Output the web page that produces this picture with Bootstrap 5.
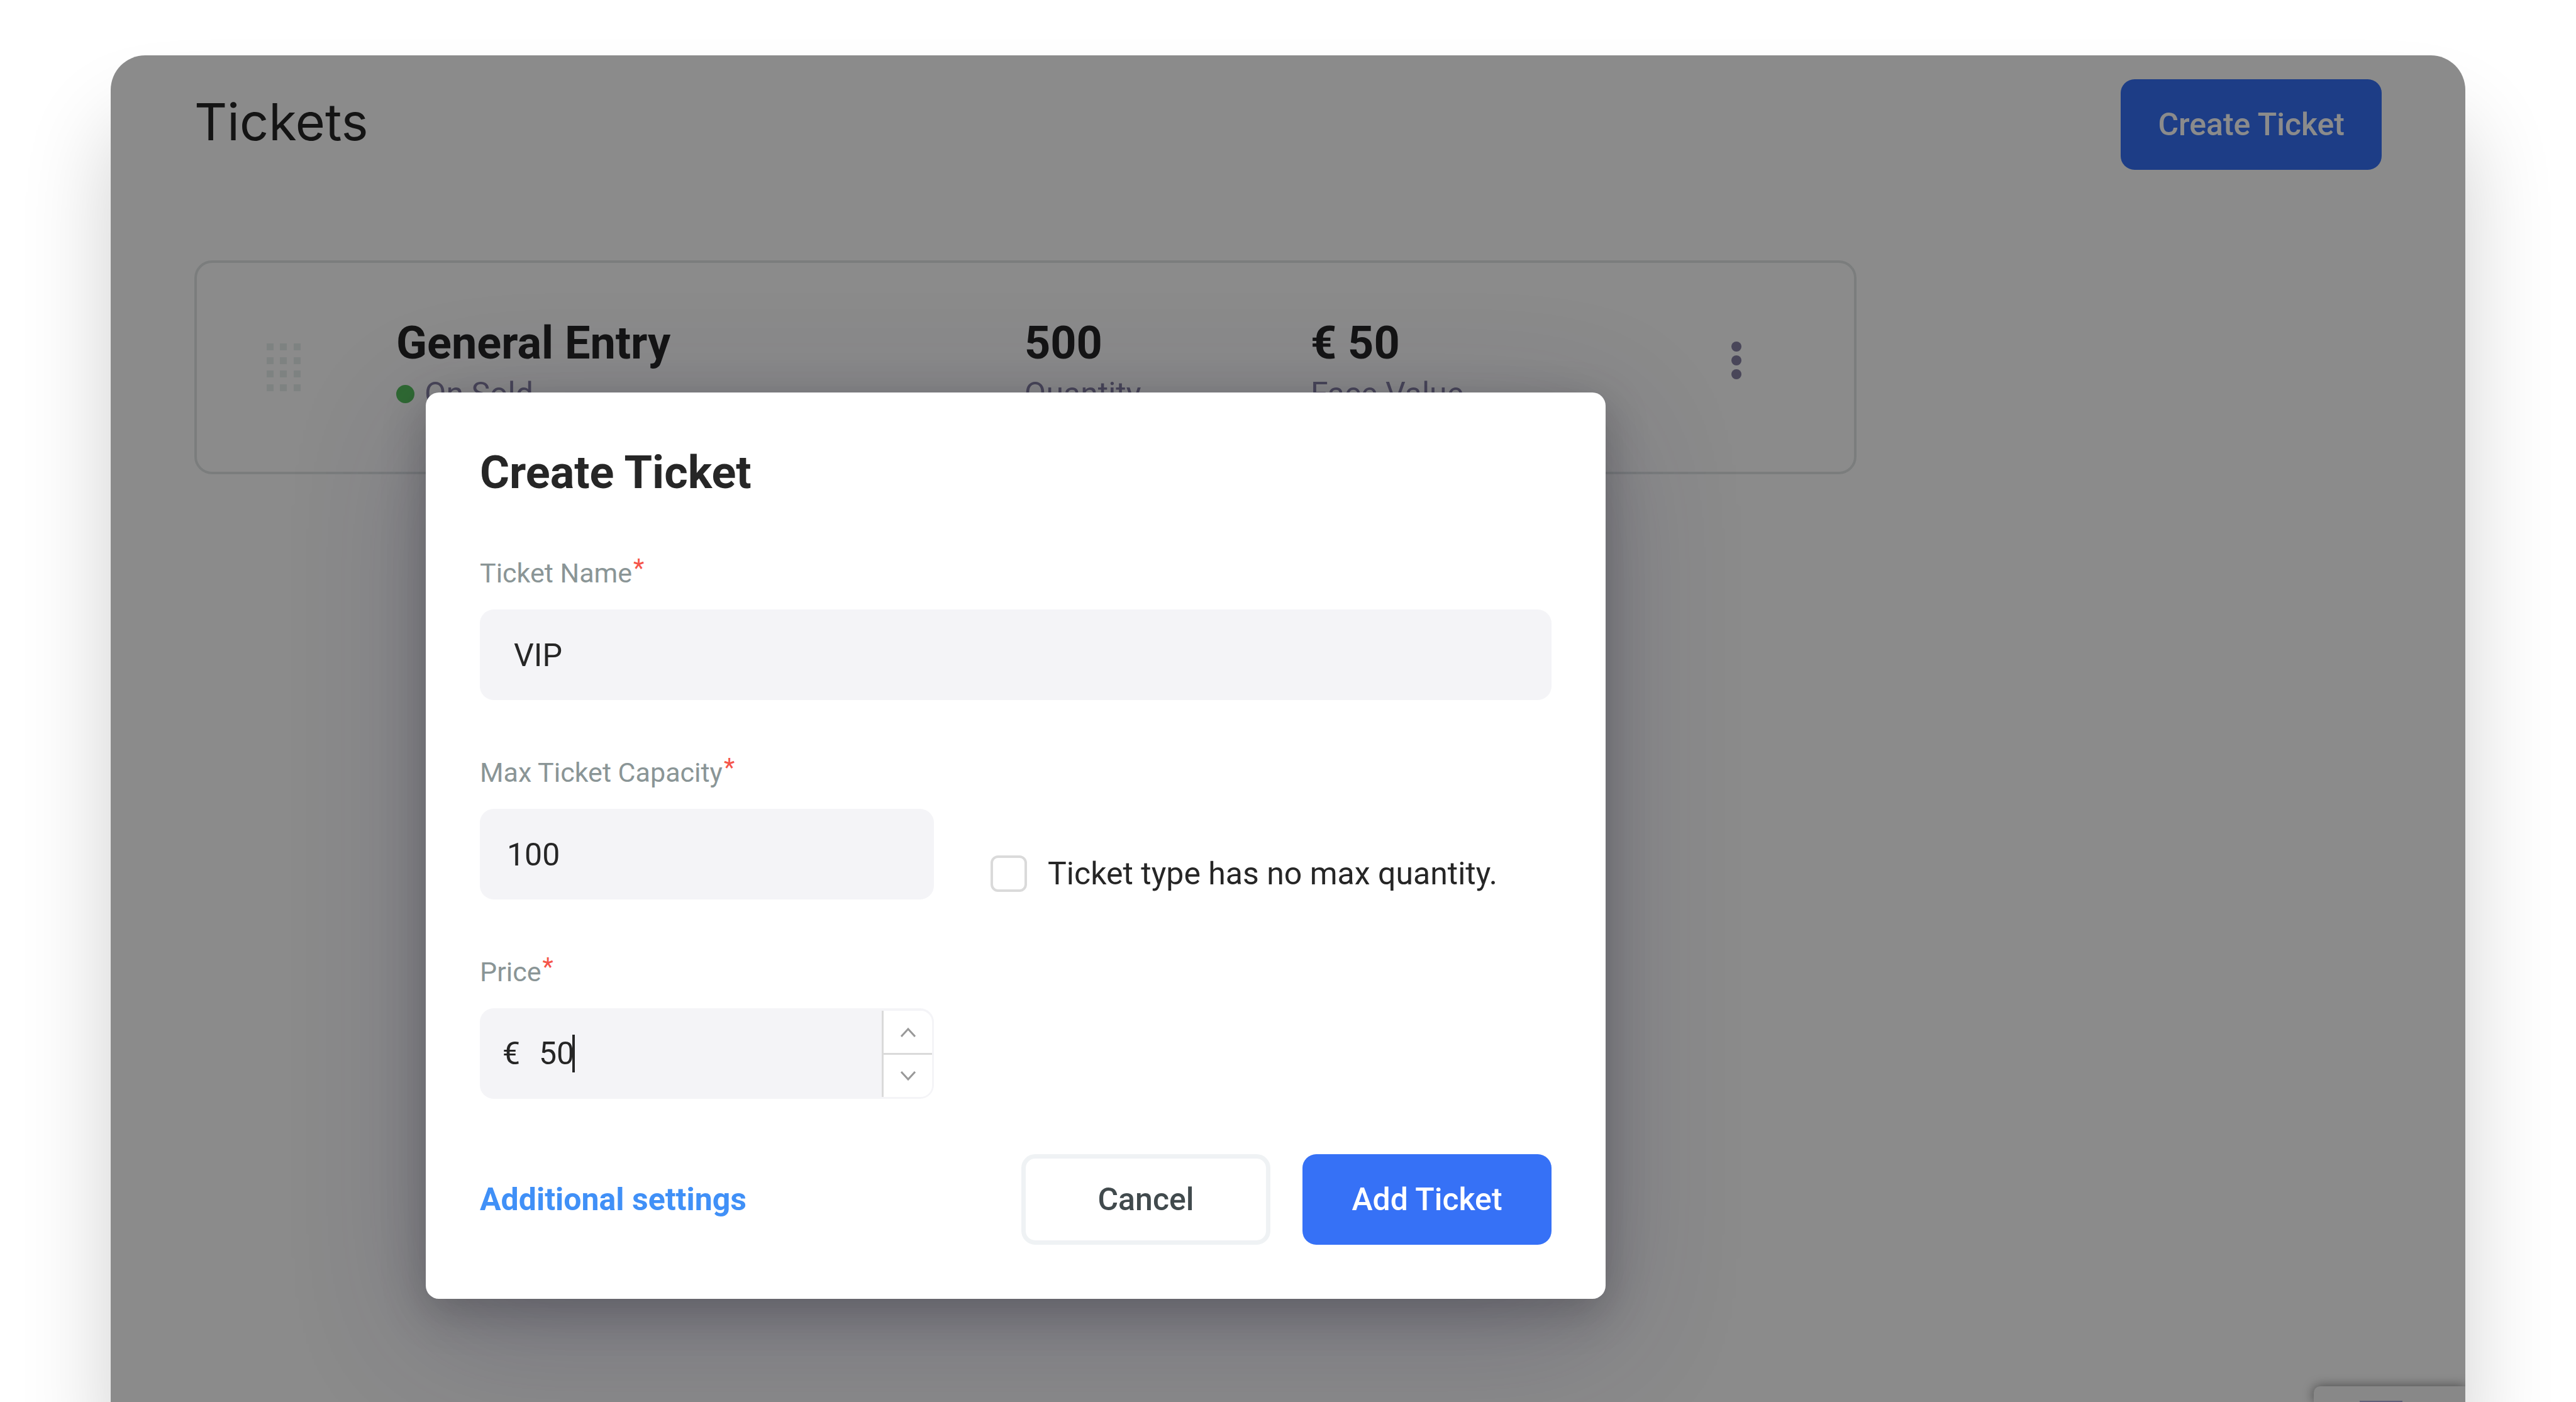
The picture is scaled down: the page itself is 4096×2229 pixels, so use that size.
<!DOCTYPE html>
<html lang="en">
<head>
<meta charset="utf-8">
<meta name="viewport" content="width=device-width, initial-scale=1">
<title>Tickets</title>
<link href="https://cdn.jsdelivr.net/npm/bootstrap@5.3.0/dist/css/bootstrap.min.css" rel="stylesheet">
<style>
  body { background: #fff; color: #262626; font-family: Roboto, "Liberation Sans", sans-serif; font-size: 50px; line-height: 58px; }
  .stage { height: 100vh; padding: 88px 176px 0; }
  .app-window { border-radius: 55px 55px 0 0; background: #fff; box-shadow: 0 110px 140px rgba(0,0,0,.19); }
  .app-body { padding: 38px 133px 0; }
  .page-title { font-family: Inter, sans-serif; font-size: 81px; line-height: 96px; font-weight: 400; padding-bottom: 8px; margin: 0; }
  .btn-app { height: 144px; min-width: 396px; padding: 0 59px; border: 0; border-radius: 22px; font-size: 50px; line-height: 58px; font-weight: 500; }
  .btn-blue, .btn-blue:hover { background: #3671f6; color: #fff; }
  .btn-line { border: 7px solid #eff2f4; background: #fff; color: #414a4d; }

  .ticket-row { width: 76%; height: 340px; margin-top: 144px; border: 4px solid #e1e6e6; border-radius: 28px; display: grid; grid-template-columns: 317px 997fr 454fr 668fr 195px; }
  .ticket-cell { padding-top: 86px; }
  .cell-value { font-size: 72px; line-height: 84px; font-weight: 700; margin-bottom: 9px; }
  .cell-note { color: #8681a3; }
  .status-dot { width: 29px; height: 29px; border-radius: 50%; background: #56c25e; }
  .grip { padding-left: 111px; }
  .kebab { padding: 0 0 22px; border: 0; background: none; }

  .backdrop { background: rgba(0,0,0,.455); }
  .ticket-dialog { top: 536px; left: 501px; width: 1876px; padding: 86px; border-radius: 21px; background: #fff; box-shadow: 0 57px 215px rgba(40,36,80,.24), 0 20px 70px rgba(0,0,0,.24); }
  .dialog-title { font-size: 72px; line-height: 84px; font-weight: 700; margin: 0 0 92px; }
  .field { margin-bottom: 90px; }
  .field-last { margin-bottom: 88px; }
  .field-label { display: block; font-size: 43px; line-height: 50px; color: #8a9596; margin-bottom: 33px; }
  .field-label span { color: #f5554a; font-size: 40px; line-height: 30px; vertical-align: 9px; margin-left: 2px; }
  .field-box, .field-box:focus { height: 144px; border: 0; border-radius: 22px; background: #f4f4f7; color: #262626; font-size: 50px; line-height: 58px; padding: 2px 43px 0; box-shadow: none; }
  .field-wide { padding-left: 54px; padding-right: 54px; }
  .field-half { width: 722px; }
  .gap-check { gap: 90px; }
  .no-max { gap: 33px; padding-bottom: 12px; }
  .no-max .form-check-input { width: 58px; height: 58px; margin: 0; border: 4px solid #dadada; border-radius: 12px; }
  .price-box { padding: 0 0 0 36px; }
  .price-sign { width: 58px; }
  .price-input { width: 2ch; padding: 0; border: 0; background: none; color: inherit; outline: 0; }
  .caret { width: 4px; height: 60px; margin-left: -3px; background: #262626; }
  .steps { width: 80px; margin: 4px 3px 3px 0; border-left: 3px solid #dadada; border-radius: 0 18px 18px 0; background: #fff; }
  .steps button { border: 0; background: none; padding: 0; }
  .steps button + button { border-top: 3px solid #dadada; }
  .more-link { color: #4090f7; font-weight: 700; text-decoration: none; }
  .actions { gap: 51px; }

  .corner-badge { right: 0; bottom: 0; width: 241px; height: 25px; border-radius: 10px 0 0 0; background: #f9f9f9; box-shadow: 0 0 18px gray; }
  .corner-badge i { width: 68px; height: 2px; margin: auto 0 0 73px; background: #adaed8; }
</style>
</head>
<body>
<div class="stage overflow-hidden">
  <main class="app-window position-relative overflow-hidden h-100">
    <div class="app-body">
      <header class="d-flex align-items-center justify-content-between">
        <h1 class="page-title">Tickets</h1>
        <button type="button" class="btn btn-app btn-blue">Create Ticket</button>
      </header>

      <section class="ticket-row">
        <div class="grip d-flex align-items-center">
          <svg width="54" height="76" viewBox="0 0 54 76" fill="#e8eeed" aria-hidden="true">
            <path d="M0 0h11v11H0zM21 0h11v11H21zM43 0h11v11H43zM0 22h11v11H0zM21 22h11v11H21zM43 22h11v11H43zM0 43h11v11H0zM21 43h11v11H21zM43 43h11v11H43zM0 65h11v11H0zM21 65h11v11H21zM43 65h11v11H43z"/>
          </svg>
        </div>
        <div class="ticket-cell">
          <div class="cell-value">General Entry</div>
          <div class="cell-note d-flex align-items-center gap-3"><span class="status-dot"></span>On Sold</div>
        </div>
        <div class="ticket-cell">
          <div class="cell-value">500</div>
          <div class="cell-note">Quantity</div>
        </div>
        <div class="ticket-cell">
          <div class="cell-value">€ 50</div>
          <div class="cell-note">Face Value</div>
        </div>
        <button type="button" class="kebab d-flex align-items-center" aria-label="Ticket menu">
          <svg width="16" height="60" viewBox="0 0 16 60" fill="#8681a3" aria-hidden="true"><circle cx="8" cy="8" r="8"/><circle cx="8" cy="30" r="8"/><circle cx="8" cy="52" r="8"/></svg>
        </button>
      </section>
    </div>

    <div class="corner-badge position-absolute d-flex"><i></i></div>
    <div class="backdrop position-absolute top-0 start-0 w-100 h-100"></div>

    <form class="ticket-dialog position-absolute" role="dialog" aria-labelledby="dialogTitle">
      <h2 class="dialog-title" id="dialogTitle">Create Ticket</h2>
      <div class="field">
        <label class="field-label" for="ticketName">Ticket Name<span>*</span></label>
        <input class="form-control field-box field-wide" id="ticketName" type="text" value="VIP">
      </div>
      <div class="field d-flex align-items-end gap-check">
        <div>
          <label class="field-label" for="capacity">Max Ticket Capacity<span>*</span></label>
          <input class="form-control field-box field-half" id="capacity" type="text" value="100">
        </div>
        <div class="no-max d-flex align-items-center">
          <input class="form-check-input" id="noMax" type="checkbox">
          <label for="noMax">Ticket type has no max quantity.</label>
        </div>
      </div>
      <div class="field-last">
        <label class="field-label" for="price">Price<span>*</span></label>
        <div class="field-box field-half price-box d-flex align-items-center">
          <span class="price-sign">€</span>
          <input class="price-input" id="price" type="text" value="50">
          <span class="caret"></span>
          <div class="steps d-flex flex-column align-self-stretch ms-auto">
            <button type="button" class="flex-fill d-flex align-items-center justify-content-center" aria-label="Increase price">
              <svg width="24" height="16" viewBox="0 0 24 16" fill="none" stroke="#999" stroke-width="3" aria-hidden="true"><path d="M1 15 12 3l11 12"/></svg>
            </button>
            <button type="button" class="flex-fill d-flex align-items-center justify-content-center" aria-label="Decrease price">
              <svg width="24" height="16" viewBox="0 0 24 16" fill="none" stroke="#999" stroke-width="3" aria-hidden="true"><path d="m1 1 11 12L23 1"/></svg>
            </button>
          </div>
        </div>
      </div>
      <div class="d-flex align-items-center justify-content-between">
        <a class="more-link" href="#">Additional settings</a>
        <div class="actions d-flex">
          <button type="button" class="btn btn-app btn-line">Cancel</button>
          <button type="submit" class="btn btn-app btn-blue">Add Ticket</button>
        </div>
      </div>
    </form>
  </main>
</div>
<script src="https://cdn.jsdelivr.net/npm/bootstrap@5.3.0/dist/js/bootstrap.bundle.min.js"></script>
</body>
</html>
